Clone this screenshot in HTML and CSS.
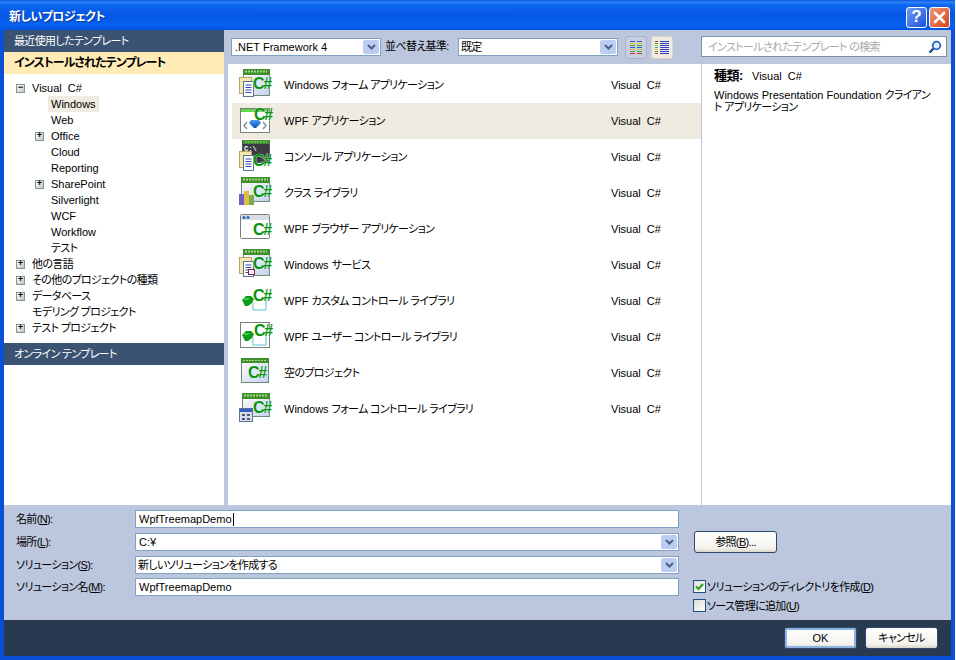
FILE: index.html
```html
<!DOCTYPE html>
<html lang="ja">
<head>
<meta charset="utf-8">
<title>新しいプロジェクト</title>
<link rel="stylesheet" href="styles.css">
</head>
<body>
<svg class="defs" width="0" height="0" aria-hidden="true">
  <defs>
    <linearGradient id="gBody" x1="0" y1="0" x2="1" y2="1"><stop offset="0" stop-color="#ffffff"/><stop offset="1" stop-color="#c3d0ee"/></linearGradient>
    <linearGradient id="gBlob" x1="0" y1="0" x2="0" y2="1"><stop offset="0" stop-color="#4f9cf0"/><stop offset="1" stop-color="#0b4fb8"/></linearGradient>
    <symbol id="win" viewBox="0 0 32 32" overflow="visible">
      <rect x="4.500" y="0.500" width="26" height="26" fill="url(#gBody)" stroke="#6f8a78"/>
      <rect x="4" y="0" width="27" height="6" fill="#3f8f2c"/>
      <path d="M6 2.500h22" stroke="#a9d48a" stroke-width="2" stroke-dasharray="2 1"/>
    </symbol>
    <symbol id="doc" viewBox="0 0 32 32" overflow="visible">
      <rect x="0.500" y="8.500" width="12" height="16" fill="#f7e6ad" stroke="#b9a468"/>
      <rect x="4.500" y="12.500" width="10" height="15" fill="#fdfdff" stroke="#5d7298"/>
      <path d="M6.500 16h6M6.500 18.500h6M6.500 21h6M6.500 23.500h6" stroke="#2a49a8"/>
    </symbol>
    <symbol id="blob" viewBox="0 0 32 32" overflow="visible">
      <path d="M14 17v8h13V12" fill="none" stroke="#5cc0d8"/>
      <path d="M3 15l4-4h5l3 3-2 4-4 3H6z" fill="#0c9c1a"/>
      <path d="M6 13h5l-2 2H4z" fill="#3ecb4a"/>
    </symbol>
  </defs>
</svg>
<div class="window">
  <header class="titlebar">
    <span class="title">新しいプロジェクト</span>
    <div class="capbtns">
      <span class="capbtn help">?</span>
      <span class="capbtn close">
        <svg width="13" height="13" viewBox="0 0 13 13"><path d="M2 2l9 9M11 2l-9 9" stroke="#fff" stroke-width="2.600" stroke-linecap="round"/></svg>
      </span>
    </div>
  </header>

  <div class="client">
    <div class="top">
      <aside class="left">
        <div class="head dark ja">最近使用したテンプレート</div>
        <div class="head active">インストールされたテンプレート</div>
        <ul class="tree">
          <li class="node"><span class="exp">−</span><span class="wide">Visual C#</span></li>
          <li class="node sub"><span class="exp none"></span><span class="picked">Windows</span></li>
          <li class="node sub"><span class="exp none"></span><span>Web</span></li>
          <li class="node sub"><span class="exp">+</span><span>Office</span></li>
          <li class="node sub"><span class="exp none"></span><span>Cloud</span></li>
          <li class="node sub"><span class="exp none"></span><span>Reporting</span></li>
          <li class="node sub"><span class="exp">+</span><span>SharePoint</span></li>
          <li class="node sub"><span class="exp none"></span><span>Silverlight</span></li>
          <li class="node sub"><span class="exp none"></span><span>WCF</span></li>
          <li class="node sub"><span class="exp none"></span><span>Workflow</span></li>
          <li class="node sub"><span class="exp none"></span><span class="ja">テスト</span></li>
          <li class="node"><span class="exp">+</span><span class="ja">他の言語</span></li>
          <li class="node"><span class="exp">+</span><span class="ja">その他のプロジェクトの種類</span></li>
          <li class="node"><span class="exp">+</span><span class="ja">データベース</span></li>
          <li class="node"><span class="exp none"></span><span class="ja">モデリング プロジェクト</span></li>
          <li class="node"><span class="exp">+</span><span class="ja">テスト プロジェクト</span></li>
        </ul>
        <div class="head dark ja">オンライン テンプレート</div>
      </aside>

      <main class="center">
        <div class="toolbar">
          <div class="combo fw"><span class="val">.NET Framework 4</span><span class="arrow"><svg width="9" height="6" viewBox="0 0 9 6"><path d="M1 1l3.500 3.500L8 1" fill="none" stroke="#4d6185" stroke-width="2"/></svg></span></div>
          <span class="sortlabel ja">並べ替え基準:</span>
          <div class="combo sort"><span class="val ja">既定</span><span class="arrow"><svg width="9" height="6" viewBox="0 0 9 6"><path d="M1 1l3.500 3.500L8 1" fill="none" stroke="#4d6185" stroke-width="2"/></svg></span></div>
          <span class="viewbtn">
            <svg width="16" height="15" viewBox="0 0 16 15"><path d="M2 1.500h5M9 1.500h5" stroke="#3a55d0"/><path d="M2 3.500h5M9 3.500h5" stroke="#e0c820"/><path d="M2 5.500h5M9 5.500h5" stroke="#3aa83a"/><path d="M2 7.500h5M9 7.500h5" stroke="#3a55d0"/><path d="M2 9.500h5M9 9.500h5" stroke="#e0c820"/><path d="M2 11.500h5M9 11.500h5" stroke="#3aa83a"/><path d="M2 13.500h5M9 13.500h5" stroke="#d83030"/></svg>
          </span>
          <span class="viewbtn on">
            <svg width="16" height="15" viewBox="0 0 16 15"><path d="M1 1.500h3" stroke="#d03030"/><path d="M1 3.500h3" stroke="#38a038"/><path d="M1 5.500h3" stroke="#e0c020"/><path d="M1 7.500h3" stroke="#38a0d0"/><path d="M1 9.500h3" stroke="#e0c020"/><path d="M1 11.500h3" stroke="#38a038"/><path d="M1 13.500h3" stroke="#d03030"/><path d="M6 1.500h9M6 3.500h9M6 5.500h9M6 7.500h9M6 9.500h9M6 11.500h9M6 13.500h9" stroke="#2a40b8"/></svg>
          </span>
          <div class="search"><span class="hint ja">インストールされたテンプレート の検索</span>
            <svg width="14" height="14" viewBox="0 0 14 14"><circle cx="8.500" cy="5.500" r="3.800" fill="#e4f0ff" stroke="#2a66b8" stroke-width="1.800"/><path d="M5.500 8.500L1.500 12.500" stroke="#1a4a90" stroke-width="2.400"/></svg>
          </div>
        </div>

        <div class="panes">
          <div class="list">
            <div class="item">
              <svg class="ico" width="32" height="32" viewBox="0 0 32 32"><use href="#win"/><use href="#doc"/><text class="cs" x="14" y="20">C#</text></svg>
              <span class="label">Windows <span class="ja">フォーム アプリケーション</span></span><span class="lang">Visual C#</span>
            </div>
            <div class="item sel">
              <svg class="ico" width="32" height="32" viewBox="0 0 32 32"><rect x="1.500" y="3.500" width="29" height="24" fill="#fff" stroke="#77807a"/><rect x="2" y="4" width="28" height="3" fill="#66d44a"/><path d="M8 17l-3 3.500 3 3.500M24 17l3 3.500-3 3.500" fill="none" stroke="#8a94a4" stroke-width="1.500"/><path d="M12 15h8l2 3-5 5h-2l-5-5z" fill="url(#gBlob)"/><text class="cs" x="15" y="15">C#</text></svg>
              <span class="label">WPF <span class="ja">アプリケーション</span></span><span class="lang">Visual C#</span>
            </div>
            <div class="item">
              <svg class="ico" width="32" height="32" viewBox="0 0 32 32"><rect x="3.500" y="-0.500" width="27" height="22" fill="#3c3a44" stroke="#555"/><rect x="4" y="-1" width="27" height="4" fill="#3f8f2c"/><path d="M6 1h22" stroke="#a9d48a" stroke-dasharray="2 1"/><text class="cmd" x="5" y="10">C:\</text><use href="#doc" y="2"/><text class="cs" x="14" y="25">C#</text></svg>
              <span class="label ja">コンソール アプリケーション</span><span class="lang">Visual C#</span>
            </div>
            <div class="item">
              <svg class="ico" width="32" height="32" viewBox="0 0 32 32"><rect x="2.500" y="0.500" width="28" height="24" fill="url(#gBody)" stroke="#6f8a78"/><rect x="2" y="0" width="29" height="6" fill="#3f8f2c"/><path d="M4 2.500h25" stroke="#a9d48a" stroke-width="2" stroke-dasharray="2 1"/><rect x="0" y="17" width="5" height="11" fill="#7060c0"/><rect x="5" y="14" width="5" height="14" fill="#d8c040"/><rect x="10" y="18" width="5" height="10" fill="#80a850"/><text class="cs" x="14" y="20">C#</text></svg>
              <span class="label ja">クラス ライブラリ</span><span class="lang">Visual C#</span>
            </div>
            <div class="item">
              <svg class="ico" width="32" height="32" viewBox="0 0 32 32"><rect x="1.500" y="1.500" width="29" height="24" rx="1" fill="#fff" stroke="#77807a"/><rect x="2" y="2" width="28" height="5" fill="#d8dde8"/><circle cx="5" cy="4.500" r="1.500" fill="#3060c0"/><circle cx="9" cy="4.500" r="1.500" fill="#3060c0"/><text class="cs" x="14" y="22">C#</text></svg>
              <span class="label">WPF <span class="ja">ブラウザー アプリケーション</span></span><span class="lang">Visual C#</span>
            </div>
            <div class="item">
              <svg class="ico" width="32" height="32" viewBox="0 0 32 32"><use href="#win"/><use href="#doc"/><rect x="9.500" y="20.500" width="6" height="5" fill="#f0f0ff" stroke="#7a2a3a"/><text class="cs" x="14" y="20">C#</text></svg>
              <span class="label">Windows <span class="ja">サービス</span></span><span class="lang">Visual C#</span>
            </div>
            <div class="item">
              <svg class="ico" width="32" height="32" viewBox="0 0 32 32"><use href="#blob"/><text class="cs" x="14" y="16">C#</text></svg>
              <span class="label">WPF <span class="ja">カスタム コントロール ライブラリ</span></span><span class="lang">Visual C#</span>
            </div>
            <div class="item">
              <svg class="ico" width="32" height="32" viewBox="0 0 32 32"><rect x="1.500" y="1.500" width="29" height="25" fill="#fff" stroke="#77807a"/><use href="#blob" y="-1"/><text class="cs" x="15" y="15">C#</text></svg>
              <span class="label">WPF <span class="ja">ユーザー コントロール ライブラリ</span></span><span class="lang">Visual C#</span>
            </div>
            <div class="item">
              <svg class="ico" width="32" height="32" viewBox="0 0 32 32"><rect x="2.500" y="1.500" width="27" height="24" fill="url(#gBody)" stroke="#6f8a78"/><rect x="2" y="1" width="28" height="5" fill="#3f8f2c"/><path d="M4 3.500h24" stroke="#a9d48a" stroke-dasharray="2 1"/><text class="cs" x="9" y="21">C#</text></svg>
              <span class="label ja">空のプロジェクト</span><span class="lang">Visual C#</span>
            </div>
            <div class="item">
              <svg class="ico" width="32" height="32" viewBox="0 0 32 32"><rect x="3.500" y="0.500" width="27" height="23" fill="url(#gBody)" stroke="#6f8a78"/><rect x="3" y="0" width="28" height="6" fill="#3f8f2c"/><path d="M5 2.500h24" stroke="#a9d48a" stroke-width="2" stroke-dasharray="2 1"/><rect x="0.500" y="15.500" width="13" height="13" fill="#d8def0" stroke="#5d7298"/><rect x="1" y="16" width="12" height="3" fill="#3060c0"/><path d="M3 21h3v2H3zM8 21h3v2H8zM3 25h3v2H3zM8 25h3v2H8z" fill="#556"/><text class="cs" x="14" y="20">C#</text></svg>
              <span class="label">Windows <span class="ja">フォーム コントロール ライブラリ</span></span><span class="lang">Visual C#</span>
            </div>
          </div>
          <div class="info">
            <p class="kind"><b>種類:</b><span class="wide">Visual C#</span></p>
            <p class="desc">Windows Presentation Foundation <span class="ja">クライアン<br>ト アプリケーション</span></p>
          </div>
        </div>
      </main>
    </div>

    <section class="form">
      <div class="fields">
        <label class="flabel ja">名前(<u>N</u>):</label>
        <div class="input"><span>WpfTreemapDemo</span><i class="caret"></i></div>
        <label class="flabel ja">場所(<u>L</u>):</label>
        <div class="input"><span>C:¥</span><span class="arrow"><svg width="9" height="6" viewBox="0 0 9 6"><path d="M1 1l3.500 3.500L8 1" fill="none" stroke="#4d6185" stroke-width="2"/></svg></span></div>
        <label class="flabel ja">ソリューション(<u>S</u>):</label>
        <div class="input tight"><span class="ja">新しいソリューションを作成する</span><span class="arrow"><svg width="9" height="6" viewBox="0 0 9 6"><path d="M1 1l3.500 3.500L8 1" fill="none" stroke="#4d6185" stroke-width="2"/></svg></span></div>
        <label class="flabel ja">ソリューション名(<u>M</u>):</label>
        <div class="input"><span>WpfTreemapDemo</span></div>
      </div>
      <div class="side">
        <button class="btn browse ja" type="button">参照(<u>B</u>)...</button>
        <div class="checks">
          <div class="check"><span class="box"><svg width="11" height="11" viewBox="0 0 11 11"><path d="M2 5.500l2.500 2.500L9 3" fill="none" stroke="#21a121" stroke-width="2"/></svg></span><span class="ja">ソリューションのディレクトリを作成(<u>D</u>)</span></div>
          <div class="check"><span class="box"></span><span class="ja">ソース管理に追加(<u>U</u>)</span></div>
        </div>
      </div>
    </section>

    <footer class="footer">
      <button class="btn default" type="button">OK</button>
      <button class="btn ja" type="button">キャンセル</button>
    </footer>
  </div>
</div>
</body>
</html>
```
FILE: styles.css
```css
* { box-sizing: border-box; }
html, body { margin: 0; padding: 0; }
body {
  width: 956px;
  height: 660px;
  overflow: hidden;
  background: #fff;
  color: #000;
  font-family: "Liberation Sans", "Noto Sans CJK JP", sans-serif;
  font-size: 11px;
  font-feature-settings: "palt";
  line-height: 16px;
}
.ja { letter-spacing: -0.65px; }
.wide { word-spacing: 3px; }
.defs { display: block; }
.window { width: 955px; height: 660px; display: flex; flex-direction: column; background: #0a4fd8; }

.titlebar {
  height: 30px;
  flex: none;
  display: flex;
  align-items: center;
  justify-content: space-between;
  padding: 4px 5px 0 9px;
  background: linear-gradient(#0a53dc 0, #2c86fb 2px, #0d66ee 5px, #0557e6 15px, #0661ee 25px, #0553e0 30px);
}
.title { color: #fff; font-size: 12px; letter-spacing: -0.55px; font-weight: 700; text-shadow: 1px 1px 0 #0b3a9a; }
.capbtns { display: flex; gap: 2px; }
.capbtn {
  width: 21px; height: 21px;
  display: flex; align-items: center; justify-content: center;
  border: 1px solid #fff;
  border-radius: 3px;
  color: #fff;
  font-family: "Liberation Sans", sans-serif;
  font-size: 17px;
  font-weight: 700;
}
.help { background: linear-gradient(135deg, #6f9cf5, #1d50d8); }
.close { background: linear-gradient(135deg, #ee9a7c, #d5451a); }

.client { flex: 1; display: flex; flex-direction: column; margin: 0 4px 4px; background: #bcc7de; min-height: 0; }
.top { height: 475px; flex: none; display: flex; }

.left { width: 220px; flex: none; background: #fff; display: flex; flex-direction: column; }
.head { height: 22px; flex: none; padding: 3px 10px; }
.dark { background: #3b5372; color: #fff; }
.active { background: #ffebb6; font-size: 12px; letter-spacing: -0.95px; font-weight: 700; }
.tree { list-style: none; margin: 0; padding: 6px 0 7px; height: 269px; flex: none; }
.node { height: 16px; display: flex; align-items: center; padding-left: 12px; gap: 7px; }
.node.sub { padding-left: 31px; }
.exp {
  width: 9px; height: 9px; flex: none;
  display: flex; align-items: center; justify-content: center;
  border: 1px solid #7a94a8;
  background: linear-gradient(135deg, #fff, #c8c4b4);
  font-family: "Liberation Mono", monospace;
  font-size: 9px;
  font-weight: 700;
  line-height: 7px;
}
.exp.none { border: 0; background: none; }
.picked { background: #efebe0; padding: 0 3px; margin-left: -3px; }

.center { flex: 1; display: flex; flex-direction: column; margin-left: 4px; min-width: 0; }
.toolbar { height: 34px; flex: none; display: flex; align-items: flex-start; padding: 8px 0 0 3px; }
.combo, .input {
  height: 18px;
  display: flex;
  align-items: center;
  justify-content: space-between;
  background: #fff;
  border: 1px solid #7fa3c4;
  padding-left: 3px;
}
.fw { width: 150px; }
.sort { width: 160px; padding-left: 2px; }
.sortlabel { width: 73px; margin-left: 4px; white-space: nowrap; line-height: 17px; }
.arrow {
  width: 16px; height: 14px; margin-right: 1px;
  display: flex; align-items: center; justify-content: center;
  background: #bccdf4;
  border-radius: 2px;
}
.viewbtn {
  width: 22px; height: 23px; margin: -2px 0 0 7px;
  display: flex; align-items: center; justify-content: center;
  border: 1px solid #aab3c6;
  border-radius: 3px;
  background: #c6cee0;
}
.viewbtn.on { margin-left: 4px; background: #efebe0; border-color: #d8d4c8; }
.search {
  width: 246px; height: 21px; margin: -2px 0 0 28px;
  display: flex; align-items: center; justify-content: space-between;
  padding: 0 4px 0 6px;
  background: #fff;
  border: 1px solid #7f8fa4;
}
.hint { color: #a8a8a8; }

.panes { flex: 1; display: flex; min-height: 0; }
.list { width: 473px; flex: none; background: #fff; padding: 3px 0 0 4px; }
.item { height: 36px; display: flex; align-items: center; padding-left: 7px; }
.item.sel { background: #efebe0; }
.ico { flex: none; overflow: visible; margin-right: 13px; }
.cs { font: 700 16px "Liberation Sans", sans-serif; letter-spacing: -1.2px; fill: #08930f; stroke: #fff; stroke-width: 0.6px; paint-order: stroke; }
.cmd { font: 700 7px "Liberation Mono", monospace; fill: #fff; }
.label { flex: 1; white-space: nowrap; }
.lang { width: 90px; flex: none; word-spacing: 3px; }

.info { flex: 1; margin-left: 1px; background: #fff; padding: 4px 12px; }
.info p { margin: 0; white-space: nowrap; }
.kind { display: flex; height: 16px; }
.kind b { width: 38px; font-size: 13px; letter-spacing: -0.5px; }
.info .kind { margin-bottom: 5px; }
.desc { line-height: 12px; }

.form { height: 115px; flex: none; display: flex; padding: 5px 0 0 12px; }
.fields {
  width: 663px; flex: none;
  display: grid;
  grid-template-columns: 119px 544px;
  grid-template-rows: 23px 23px 22px 18px;
  align-items: start;
}
.flabel { white-space: nowrap; padding-top: 1px; }
.input { height: 18px; padding-left: 3px; }
.input.tight { padding-left: 2px; }
.fields > .input > span:first-child { white-space: nowrap; }
.input:has(.caret) { justify-content: flex-start; }
.caret { width: 1px; height: 13px; background: #000; margin-left: 1px; }
.side { margin-left: 15px; display: flex; flex-direction: column; padding-top: 21px; }
.btn {
  width: 73px; height: 22px;
  padding: 0;
  font: inherit;
  color: #000;
  border: 1px solid #2c4a70;
  border-radius: 3px;
  background: linear-gradient(#fff, #f4f3ee 80%, #d8d5c8);
}
.browse { width: 83px; }
.checks { margin-top: 27px; margin-left: -1px; display: flex; flex-direction: column; gap: 6px; }
.check { height: 13px; display: flex; align-items: center; gap: 1px; white-space: nowrap; }
.box {
  width: 13px; height: 13px; flex: none;
  display: flex; align-items: center; justify-content: center;
  border: 1px solid #1c5180;
  background: linear-gradient(135deg, #dcdcd7, #fff);
}

.footer { flex: 1; background: #29394f; display: flex; justify-content: flex-end; gap: 8px; padding: 7px 13px 0 0; }
.default { box-shadow: inset 0 0 0 2px #8fb4e0; }
```
